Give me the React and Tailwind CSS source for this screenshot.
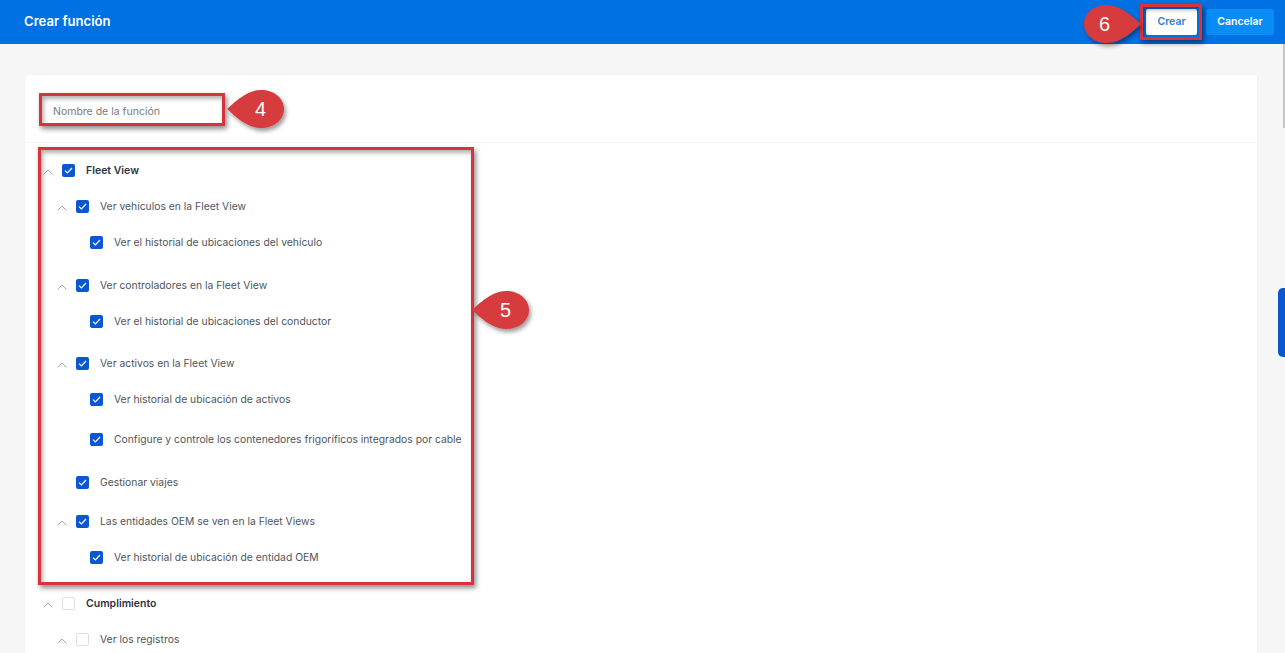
const rows = [
  { t: "Fleet View", cls: "pl-0 mt-0", bold: true, on: true, ch: true },
  { t: "Ver vehículos en la Fleet View", cls: "pl-[14px] mt-4", on: true, ch: true },
  { t: "Ver el historial de ubicaciones del vehículo", cls: "pl-[28px] mt-4", on: true, ch: false },
  { t: "Ver controladores en la Fleet View", cls: "pl-[14px] mt-[23px]", on: true, ch: true },
  { t: "Ver el historial de ubicaciones del conductor", cls: "pl-[28px] mt-4", on: true, ch: false },
  { t: "Ver activos en la Fleet View", cls: "pl-[14px] mt-[22px]", on: true, ch: true },
  { t: "Ver historial de ubicación de activos", cls: "pl-[28px] mt-4", on: true, ch: false },
  { t: "Configure y controle los contenedores frigoríficos integrados por cable", cls: "pl-[28px] mt-5", on: true, ch: false },
  { t: "Gestionar viajes", cls: "pl-[14px] mt-[23px]", on: true, ch: false },
  { t: "Las entidades OEM se ven en la Fleet Views", cls: "pl-[14px] mt-[19px]", on: true, ch: true },
  { t: "Ver historial de ubicación de entidad OEM", cls: "pl-[28px] mt-4", on: true, ch: false },
  { t: "Cumplimiento", cls: "pl-0 mt-[26px]", bold: true, on: false, ch: true },
  { t: "Ver los registros", cls: "pl-[14px] mt-4", on: false, ch: true },
];

function Chevron() {
  return (
    <svg width="10" height="6" viewBox="0 0 10 6" fill="none" stroke="#a3a7ad" strokeWidth="1" className="mt-[3px]">
      <path d="M0.7 5.3 5 1l4.3 4.3" />
    </svg>
  );
}

function Check({ on }) {
  if (!on) return <span className="block w-[13px] h-[13px] rounded-[2px] border border-[#dcdee2] bg-white" />;
  return (
    <span className="flex items-center justify-center w-[13px] h-[13px] rounded-[2px] bg-[#0b57d0]">
      <svg width="9" height="7" viewBox="0 0 9 7" fill="none" stroke="#ffffff" strokeWidth="1.2">
        <path d="M1 3.6 3.4 6 8 1" />
      </svg>
    </span>
  );
}

function Row({ r }) {
  return (
    <div className={`flex items-center h-5 ${r.cls}`}>
      <span className="w-[24px] pl-[5px] flex items-center shrink-0">{r.ch && <Chevron />}</span>
      <span className="mt-[1px] shrink-0"><Check on={r.on} /></span>
      <span className={`ml-[11px] whitespace-nowrap ${r.bold ? "pt-[1px] text-[10.5px] font-semibold text-[#2f343b]" : "pt-[2px] text-[10.35px] text-[#50555c]"}`}>{r.t}</span>
    </div>
  );
}

function Callout({ n, cls, flip }) {
  return (
    <div className={`absolute w-[58px] h-[40px] ${cls}`}>
      <svg width="58" height="40" viewBox="0 0 58 40" className="absolute inset-0 overflow-visible">
        <defs>
          <filter id={`s${n}`} x="-20%" y="-20%" width="150%" height="160%">
            <feDropShadow dx="2" dy="3" stdDeviation="2" floodColor="#000" floodOpacity="0.4" />
          </filter>
        </defs>
        <path
          d={flip ? "M58 20 C50 13 38 1 24 1 C11 1 1 9 1 20 C1 31 11 39 24 39 C38 39 50 27 58 20Z" : "M0 20 C8 13 20 1 34 1 C47 1 57 9 57 20 C57 31 47 39 34 39 C20 39 8 27 0 20Z"}
          fill="#d63a3c"
          filter={`url(#s${n})`}
        />
      </svg>
      <span className={`absolute top-[8px] text-[20px] leading-6 text-white font-['Liberation_Sans',sans-serif] ${flip ? "left-[16px]" : "left-[28px]"}`}>{n}</span>
    </div>
  );
}

const box = "absolute border-[3px] border-[#d8333a] shadow-[2px_3px_5px_rgba(0,0,0,0.45),inset_2px_3px_4px_rgba(0,0,0,0.3)]";

export default function App() {
  return (
    <div className="relative h-[653px] overflow-hidden bg-[#f6f6f6] font-['Inter',sans-serif]">
      <header className="flex items-center justify-between h-[44px] pl-6 pr-[11px] bg-[#0071e3]">
        <h1 className="text-[13.1px] font-semibold text-white">Crear función</h1>
        <div className="flex items-center gap-[9px]">
          <button className="w-[51px] h-[26px] rounded-[2px] bg-white text-[10.5px] font-semibold text-[#2a80dc]">Crear</button>
          <button className="w-[68px] h-[26px] rounded-[3px] bg-[#0a8cf5] text-[10.5px] font-semibold text-white">Cancelar</button>
        </div>
      </header>

      <main className="ml-[25px] mr-[28px] mt-[31px] bg-white rounded-[3px] shadow-[0_0_2px_rgba(0,0,0,0.06)]">
        <div className="h-[68px] pl-[17px] pt-[21px] border-b border-[#f5f5f5]">
          <div className="flex items-center w-[179px] h-[31px] pl-[11px] text-[10.5px] text-[#777b81]">Nombre de la función</div>
        </div>
        <div className="pl-[13px] pt-[17px] pb-8">
          {rows.map((r) => <Row key={r.t} r={r} />)}
        </div>
      </main>

      <div className={`${box} left-[39px] top-[93px] w-[186px] h-[33px]`} />
      <div className={`${box} left-[38px] top-[147px] w-[436px] h-[438px]`} />
      <div className={`${box} left-[1140px] top-[4px] w-[62px] h-[36px]`} />

      <Callout n="4" cls="left-[227px] top-[89px]" />
      <Callout n="5" cls="left-[472px] top-[290px]" />
      <Callout n="6" cls="left-[1083px] top-[4px]" flip />

      <div className="absolute right-0 top-[44px] w-[2px] h-[84px] bg-[#c6c6c6]" />
      <div className="absolute right-0 top-[288px] w-[7px] h-[69px] rounded-l-[5px] bg-[#0b57d0]" />
    </div>
  );
}
